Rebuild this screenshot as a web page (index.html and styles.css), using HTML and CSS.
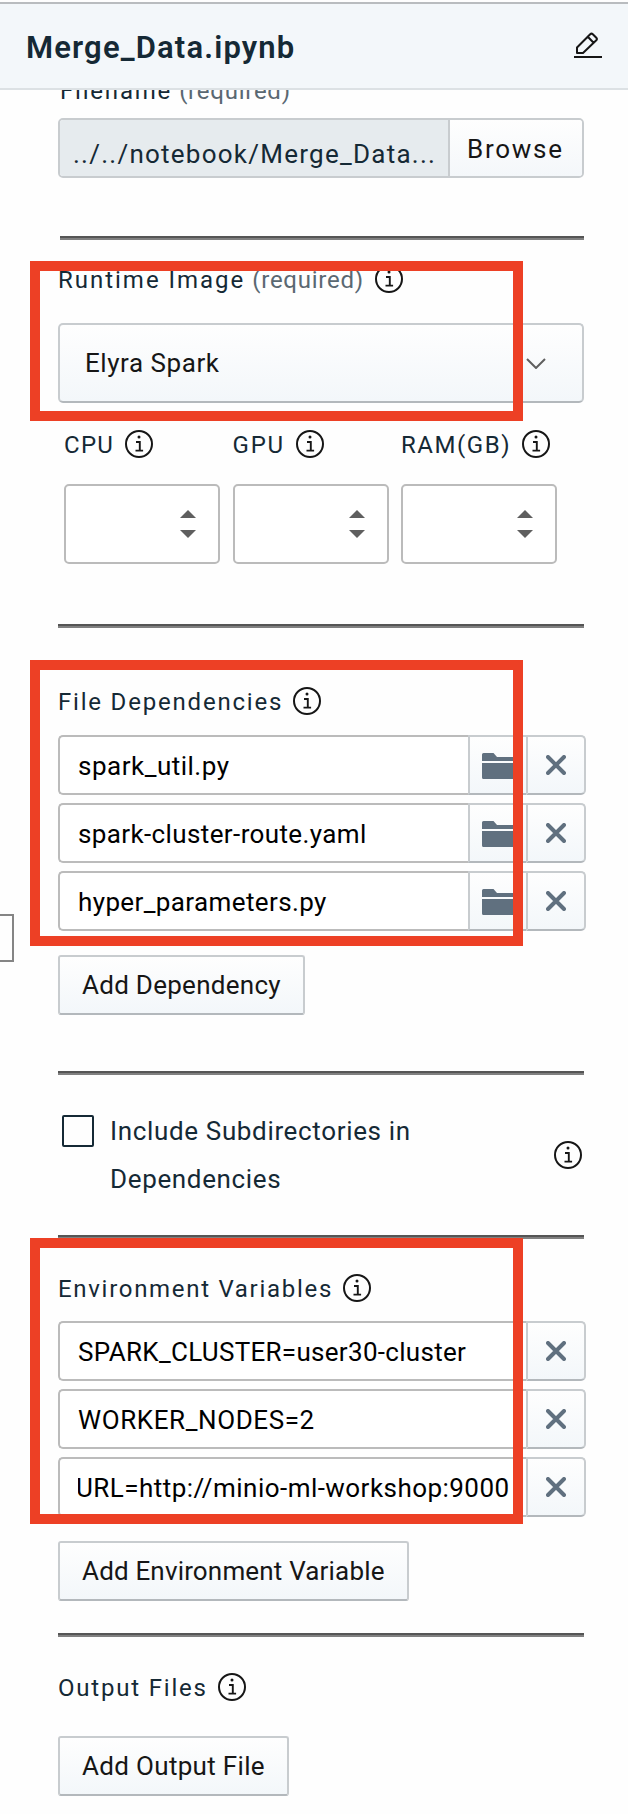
FILE: index.html
```html
<!DOCTYPE html>
<html lang="en">
<head>
<meta charset="utf-8">
<title>Merge_Data.ipynb</title>
<link rel="stylesheet" href="styles.css">
</head>
<body>
<svg class="defs" width="0" height="0">
  <symbol id="info" viewBox="0 0 28 28">
    <circle cx="14" cy="14" r="13" fill="none" stroke="#161616" stroke-width="2"/>
    <circle cx="14" cy="7" r="1.5" fill="#161616"/>
    <path d="M11 12h3.8v8M10.5 20.6h7.6" fill="none" stroke="#161616" stroke-width="1.9"/>
  </symbol>
  <symbol id="folder" viewBox="0 0 36 26">
    <path d="M0 8V1.5Q0 0 1.5 0H11.5L15 4H34.5Q36 4 36 5.5V8ZM0 10H36V24.5Q36 26 34.5 26H1.5Q0 26 0 24.5Z" fill="#60707f"/>
  </symbol>
  <symbol id="close" viewBox="0 0 20 20">
    <path d="M2 2L18 18M18 2L2 18" stroke="#60707f" stroke-width="4" stroke-linecap="round"/>
  </symbol>
  <symbol id="spin" viewBox="0 0 16 28">
    <path d="M0 8L8 0L16 8ZM0 20H16L8 28Z" fill="#5f5f5f"/>
  </symbol>
</svg>
<header class="header">
  <h1 class="title">Merge_Data.ipynb</h1>
  <svg class="edit" viewBox="0 0 28 26" fill="none" stroke="#161616" stroke-width="2">
    <path d="M0 25H28"/>
    <path d="M3 21V15.5L16.2 2.2Q17.5 1 18.8 2.2L22.3 5.7Q23.5 7 22.3 8.3L9 21ZM13.8 4.8L19.6 10.8" stroke-linejoin="round"/>
  </svg>
</header>
<main class="panel">
  <div class="label label-filename"><span class="name">Filename</span><span class="req">(required)</span></div>
  <div class="file"><div class="path">../../notebook/Merge_Data...</div><div class="browse">Browse</div></div>
  <hr class="rule rule-file">

  <div class="label label-runtime"><span class="name">Runtime Image</span><span class="req">(required)</span><svg class="info"><use href="#info"/></svg></div>
  <div class="select"><span>Elyra Spark</span><svg class="chevron" viewBox="0 0 20 11"><path d="M1 1L10 10L19 1" fill="none" stroke="#5f5f5f" stroke-width="2"/></svg></div>
  <div class="numbers">
    <div class="number"><div class="label"><span class="name cpu">CPU</span><svg class="info"><use href="#info"/></svg></div><div class="stepper"><svg class="spin"><use href="#spin"/></svg></div></div>
    <div class="number"><div class="label"><span class="name">GPU</span><svg class="info"><use href="#info"/></svg></div><div class="stepper"><svg class="spin"><use href="#spin"/></svg></div></div>
    <div class="number"><div class="label"><span class="name ram">RAM(GB)</span><svg class="info"><use href="#info"/></svg></div><div class="stepper"><svg class="spin"><use href="#spin"/></svg></div></div>
  </div>
  <hr class="rule rule-numbers">

  <div class="label label-deps"><span class="name">File Dependencies</span><svg class="info"><use href="#info"/></svg></div>
  <div class="rows">
    <div class="row"><div class="field"><span class="util">spark_util.py</span></div><div class="cell"><svg class="folder"><use href="#folder"/></svg></div><div class="cell last"><svg class="close"><use href="#close"/></svg></div></div>
    <div class="row"><div class="field"><span>spark-cluster-route.yaml</span></div><div class="cell"><svg class="folder"><use href="#folder"/></svg></div><div class="cell last"><svg class="close"><use href="#close"/></svg></div></div>
    <div class="row"><div class="field"><span>hyper_parameters.py</span></div><div class="cell"><svg class="folder"><use href="#folder"/></svg></div><div class="cell last"><svg class="close"><use href="#close"/></svg></div></div>
  </div>
  <div class="button">Add Dependency</div>
  <hr class="rule rule-deps">

  <div class="check"><div class="box"></div><div class="check-text">Include Subdirectories in<br>Dependencies</div><svg class="info"><use href="#info"/></svg></div>
  <hr class="rule rule-check">

  <div class="label label-env"><span class="name">Environment Variables</span><svg class="info"><use href="#info"/></svg></div>
  <div class="rows rows-env">
    <div class="row"><div class="field"><span class="cluster">SPARK_CLUSTER=user30-cluster</span></div><div class="cell last"><svg class="close"><use href="#close"/></svg></div></div>
    <div class="row"><div class="field"><span class="nodes">WORKER_NODES=2</span></div><div class="cell last"><svg class="close"><use href="#close"/></svg></div></div>
    <div class="row"><div class="field"><span class="url">URL=http://minio-ml-workshop:9000</span></div><div class="cell last"><svg class="close"><use href="#close"/></svg></div></div>
  </div>
  <div class="button button-env">Add Environment Variable</div>
  <hr class="rule rule-env">

  <div class="label label-output"><span class="name">Output Files</span><svg class="info"><use href="#info"/></svg></div>
  <div class="button button-output">Add Output File</div>
</main>
<div class="edge-box"></div>
<div class="mark mark-runtime"></div>
<div class="mark mark-deps"></div>
<div class="mark mark-env"></div>
</body>
</html>
```
FILE: styles.css
```css
* { box-sizing: border-box; }
body {
  position: relative;
  width: 628px;
  height: 1814px;
  margin: 0;
  overflow: hidden;
  background: #fefefe;
  color: #161616;
  font: 26px/36px Roboto, "Noto Sans", sans-serif;
  white-space: nowrap;
}
svg { display: block; flex: none; }
.defs { position: absolute; }

.header {
  display: flex;
  align-items: center;
  justify-content: space-between;
  height: 88px;
  margin-top: 2px;
  padding: 2px 26px 0 26px;
  border-top: 2px solid #b9bcbf;
  border-bottom: 2px solid #dce1e4;
  background: #f3f7fa;
}
.title {
  margin: 0;
  padding-top: 2px;
  color: #152935;
  font-size: 31px;
  font-weight: 600;
  letter-spacing: 1.15px;
}
.edit { width: 28px; height: 26px; margin-bottom: 4px; }

.panel { padding: 0 44px 0 58px; overflow: hidden; }

.label { display: flex; align-items: center; height: 28px; }
.name, .req { padding-top: 2px; color: #152935; font-size: 24px; }
.name { letter-spacing: 1.8px; }
.req { margin-left: 7px; color: #5a6872; letter-spacing: .75px; }
.info { width: 28px; height: 28px; margin-left: 10px; }
.label-filename { margin: -14px 0 14px 2px; }
.label-runtime { margin: 25px 0 30px; }
.label-runtime .name { letter-spacing: 1.98px; }
.label-runtime .info { margin-left: 11px; }
.label-deps { margin: 59px 0 20px; }
.label-env { margin: 35px 0 19px; }
.label-env .name { letter-spacing: 1.7px; }
.label-output { margin: 36px 0 35px; }

.rule { height: 4px; border: 0; border-top: 2px solid #555; background: #808080; }
.rule-file { margin: 58px 0 0 2px; }
.rule-numbers { margin: 60px 0 0; }
.rule-deps { margin: 56px 0 0; }
.rule-check { margin: 32px 0 0; }
.rule-env { margin: 32px 0 0; }

.file {
  display: flex;
  height: 60px;
  border: 2px solid #c8cccf;
  border-radius: 5px;
  overflow: hidden;
}
.path {
  width: 388px;
  padding: 14px 0 0 13px;
  line-height: 40px;
  background: #e6ebee;
  color: #152935;
  letter-spacing: 1.25px;
}
.browse {
  flex: 1;
  height: 58px;
  border-left: 2px solid #c8cccf;
  border-bottom: 2px solid #b3b8bc;
  padding-left: 17px;
  line-height: 59px;
  letter-spacing: 1.75px;
  background: linear-gradient(#fefefe, #f4f7fa);
}

.select {
  display: flex;
  align-items: center;
  justify-content: space-between;
  height: 80px;
  padding: 0 36px 0 25px;
  border: 2px solid #c8cccf;
  border-bottom-color: #b3b8bc;
  border-radius: 5px;
  background: linear-gradient(#fefefe, #f3f7fa);
  letter-spacing: .55px;
}
.chevron { width: 20px; height: 11px; }

.numbers { display: flex; gap: 12.5px; margin: 27px 0 0 6px; }
.number { width: 156px; }
.number .label { margin-bottom: 26px; }
.number .info { margin-left: 11px; }
.cpu { letter-spacing: 1.3px; }
.ram { letter-spacing: 1.55px; }
.stepper {
  display: flex;
  align-items: center;
  justify-content: flex-end;
  height: 80px;
  padding-right: 22px;
  border: 2px solid #bbb;
  border-radius: 5px;
  background: #fff;
}
.spin { width: 16px; height: 28px; }

.rows { display: grid; gap: 8px; margin-right: -2px; }
.row { display: flex; height: 60px; }
.field {
  flex: 1;
  min-width: 0;
  padding: 11px 14px 0 18px;
  border: 2px solid #bbb;
  border-right: 0;
  border-radius: 5px 0 0 5px;
  background: #fff;
  color: #000;
  letter-spacing: .38px;
}
.field span { display: block; overflow: hidden; }
.field .util { letter-spacing: .5px; }
.field .cluster { letter-spacing: .3px; }
.field .nodes { letter-spacing: .6px; }
.field .url { text-indent: -2px; letter-spacing: .46px; }
.cell {
  display: flex;
  align-items: center;
  width: 58px;
  padding-left: 12px;
  border: 2px solid #c8cccf;
  border-right: 0;
  border-bottom-color: #b3b8bc;
  background: linear-gradient(#fefefe, #f3f7fa);
}
.cell.last { width: 60px; padding-left: 18px; border-right: 2px solid #c8cccf; border-radius: 0 5px 5px 0; }
.folder { width: 36px; height: 26px; margin-top: 2px; }
.close { width: 20px; height: 20px; }

.button {
  width: fit-content;
  height: 60px;
  margin-top: 24px;
  padding: 0 22px;
  border: 2px solid #c8cccf;
  border-bottom-color: #b3b8bc;
  border-radius: 3px;
  background: linear-gradient(#fefefe, #f3f7fa);
  line-height: 57px;
  letter-spacing: .27px;
}
.button-env { letter-spacing: .17px; }
.button-output { margin-top: 0; letter-spacing: .32px; }

.check { display: flex; align-items: center; margin-top: 32px; padding-left: 4px; line-height: 48px; }
.box { align-self: flex-start; width: 32px; height: 32px; margin-top: 8px; border: 2px solid #152935; border-radius: 2px; }
.check-text { margin-left: 16px; color: #152935; letter-spacing: .65px; }
.check .info { margin: 0 2px 0 auto; }

/* Highlights drawn over the form */
.mark { position: absolute; left: 30px; width: 493px; border: 10px solid #ed4025; }
.mark-runtime { top: 261px; height: 160px; }
.mark-deps { top: 660px; height: 286px; }
.mark-env { top: 1238px; height: 286px; }
.edge-box { position: absolute; left: -20px; top: 914px; width: 34px; height: 48px; border: 2px solid #858585; }
```
